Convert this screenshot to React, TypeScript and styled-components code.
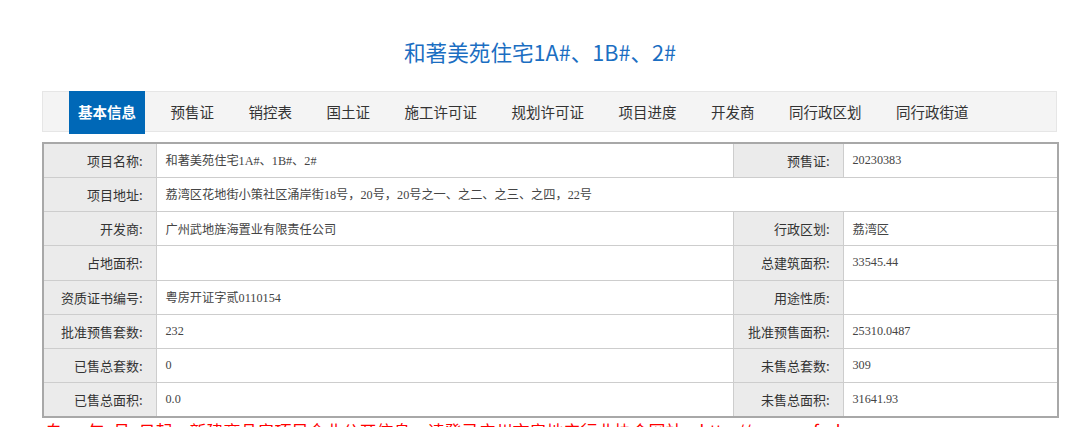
import React, { FC } from "react";
import styled, { createGlobalStyle } from "styled-components";

const GlobalStyle = createGlobalStyle`
  html, body {
    margin: 0;
    padding: 0;
    background: #fff;
  }
  body {
    font-family: "Noto Sans CJK SC", "Noto Sans", sans-serif;
    color: #333;
  }
`;

const Page = styled.div`
  width: 1080px;
  height: 427px;
  overflow: hidden;
`;

const Title = styled.h1`
  margin: 0;
  padding-top: 36px;
  font-size: 21.6px;
  line-height: 31px;
  font-weight: normal;
  text-align: center;
  color: #1b6ec2;
  font-family: "Noto Sans CJK SC", sans-serif;
`;

const Content = styled.div`
  width: 1015px;
  margin: 24px 0 0 42px;
`;

const TabBar = styled.ul`
  display: flex;
  align-items: flex-start;
  gap: 16.5px;
  box-sizing: border-box;
  height: 41px;
  margin: 0;
  padding: 0 0 0 26px;
  list-style: none;
  background: #f4f4f4;
  border: 1px solid #e6e6e6;
`;

const Tab = styled.li<{ $active?: boolean }>`
  margin-top: -1px;
  height: ${(p) => (p.$active ? "43px" : "40px")};
  padding: 0 9px;
  line-height: 41px;
  font-size: 14.5px;
  font-weight: ${(p) => (p.$active ? "bold" : "normal")};
  color: ${(p) => (p.$active ? "#fff" : "#333")};
  background: ${(p) => (p.$active ? "#0068b7" : "transparent")};
  cursor: pointer;
  white-space: nowrap;
`;

const InfoTable = styled.table`
  width: 1015px;
  margin-top: 10px;
  border-collapse: collapse;
  table-layout: fixed;
  border: 2px solid #a8a8a8;
`;

const Row = styled.tr`
  height: 34.25px;
`;

const Label = styled.td`
  box-sizing: border-box;
  padding: 0 13px 0 0;
  text-align: right;
  background: #ebebeb;
  border: 1px solid #cdcdcd;
  font-size: 13px;
  color: #333;
  font-family: "Noto Sans CJK SC", sans-serif;
  white-space: nowrap;
`;

const Value = styled.td`
  box-sizing: border-box;
  padding: 0 0 0 9px;
  text-align: left;
  background: #fff;
  border: 1px solid #cdcdcd;
  font-size: 12.2px;
  color: #444;
  font-family: "Liberation Serif", "Noto Sans CJK SC", serif;
  white-space: nowrap;
`;

const Notice = styled.p`
  margin: 1px 0 0;
  padding-left: 3px;
  font-size: 17px;
  line-height: 24px;
  color: #ff0000;
  white-space: nowrap;
  font-family: "Noto Sans CJK SC", sans-serif;
`;

const tabs = [
  "基本信息",
  "预售证",
  "销控表",
  "国土证",
  "施工许可证",
  "规划许可证",
  "项目进度",
  "开发商",
  "同行政区划",
  "同行政街道",
];

type Pair = [string, string];

const rows: { left: Pair; right?: Pair }[] = [
  { left: ["项目名称:", "和著美苑住宅1A#、1B#、2#"], right: ["预售证:", "20230383"] },
  { left: ["项目地址:", "荔湾区花地街小策社区涌岸街18号，20号，20号之一、之二、之三、之四，22号"] },
  { left: ["开发商:", "广州武地旌海置业有限责任公司"], right: ["行政区划:", "荔湾区"] },
  { left: ["占地面积:", ""], right: ["总建筑面积:", "33545.44"] },
  { left: ["资质证书编号:", "粤房开证字贰0110154"], right: ["用途性质:", ""] },
  { left: ["批准预售套数:", "232"], right: ["批准预售面积:", "25310.0487"] },
  { left: ["已售总套数:", "0"], right: ["未售总套数:", "309"] },
  { left: ["已售总面积:", "0.0"], right: ["未售总面积:", "31641.93"] },
];

const App: FC = () => (
  <Page>
    <GlobalStyle />
    <Title>和著美苑住宅1A#、1B#、2#</Title>
    <Content>
      <TabBar>
        {tabs.map((t, i) => (
          <Tab key={t} $active={i === 0}>
            {t}
          </Tab>
        ))}
      </TabBar>
      <InfoTable>
        <colgroup>
          <col style={{ width: 113 }} />
          <col style={{ width: 577 }} />
          <col style={{ width: 110 }} />
          <col style={{ width: 215 }} />
        </colgroup>
        <tbody>
          {rows.map((r) => (
            <Row key={r.left[0]}>
              <Label>{r.left[0]}</Label>
              {r.right ? (
                <>
                  <Value>{r.left[1]}</Value>
                  <Label>{r.right[0]}</Label>
                  <Value>{r.right[1]}</Value>
                </>
              ) : (
                <Value colSpan={3}>{r.left[1]}</Value>
              )}
            </Row>
          ))}
        </tbody>
      </InfoTable>
      <Notice>
        {"自\u3000\u2002年\u2002月\u2002日起，新建商品房项目企业公开信息，请登录广州市房地产行业协会网站：http://www.gzfcxh.com"}
      </Notice>
    </Content>
  </Page>
);

export default App;
